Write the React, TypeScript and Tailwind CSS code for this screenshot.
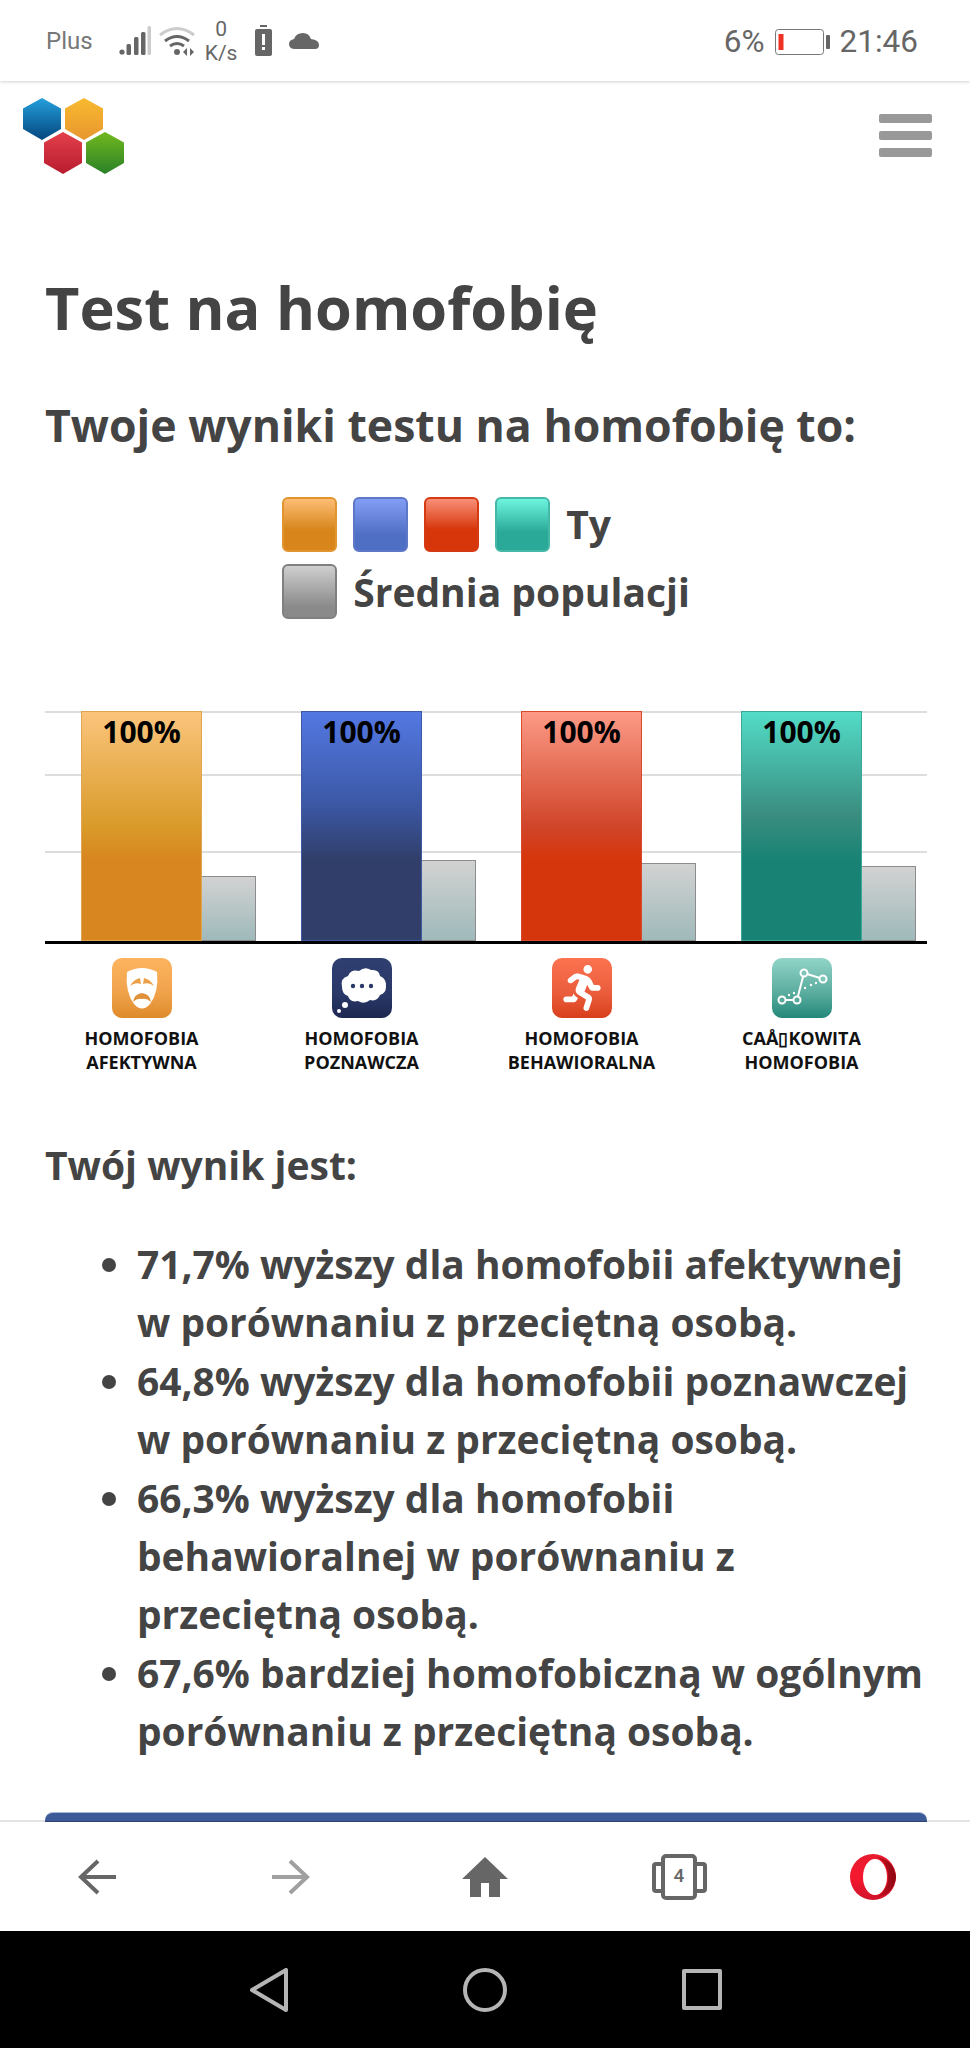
import { FaRunning } from 'react-icons/fa'

const bars = [
  {
    color: 'bg-[linear-gradient(#fbc47c,#d99b2a_50%,#d8861f_65%)] border-[#e0a550]',
    avg: 'h-[65px]',
    line1: 'HOMOFOBIA',
    line2: 'AFEKTYWNA',
    icon: <MaskIcon />,
    tile: 'bg-[linear-gradient(#fdb35f,#f0a24a_60%,#dd8a2a)]',
  },
  {
    color: 'bg-[linear-gradient(#5378e2,#3c58a6_40%,#303e69_65%)] border-[#3f5aa5]',
    avg: 'h-[81px]',
    line1: 'HOMOFOBIA',
    line2: 'POZNAWCZA',
    icon: <CloudIcon />,
    tile: 'bg-[linear-gradient(#2f3f70,#2a3868_60%,#1d2850)]',
  },
  {
    color: 'bg-[linear-gradient(#fc9a86,#d0452a_50%,#d6360b_65%)] border-[#d9492c]',
    avg: 'h-[78px]',
    line1: 'HOMOFOBIA',
    line2: 'BEHAWIORALNA',
    icon: <FaRunning className="text-white" size={46} />,
    tile: 'bg-[linear-gradient(#fc7350,#ea5c3b_60%,#d83f1a)]',
  },
  {
    color: 'bg-[linear-gradient(#52dcc7,#3a8d80_45%,#188374_65%)] border-[#3aa899]',
    avg: 'h-[75px]',
    line1: 'CAÅ▯KOWITA',
    line2: 'HOMOFOBIA',
    icon: <GraphIcon />,
    tile: 'bg-[linear-gradient(#92d4c8,#58ab9d_60%,#23877a)]',
  },
]

const results = [
  '71,7% wyższy dla homofobii afektywnej w porównaniu z przeciętną osobą.',
  '64,8% wyższy dla homofobii poznawczej w porównaniu z przeciętną osobą.',
  '66,3% wyższy dla homofobii behawioralnej w porównaniu z przeciętną osobą.',
  '67,6% bardziej homofobiczną w ogólnym porównaniu z przeciętną osobą.',
]

function MaskIcon() {
  return (
    <svg width="60" height="60" viewBox="0 0 60 60">
      <path d="M15 14Q30 6 45 14Q47 34 38 46Q30 55 22 46Q13 34 15 14z" fill="#fff" />
      <path d="M18 28Q22 21 28 20L29 26Q23 24 18 28zM42 28Q38 21 32 20L31 26Q37 24 42 28z" fill="#eda04a" />
      <path d="M21 44Q22 36 30 35Q38 36 39 44Q35 40 30 41Q25 40 21 44z" fill="#e0913a" />
    </svg>
  )
}

function CloudIcon() {
  return (
    <svg width="60" height="60" viewBox="0 0 60 60">
      <path d="M10 29q-2-9 6-11q3-7 11-5q6-5 12-1q8-1 9 6q7 3 6 11q0 6-6 8q-3 7-10 5q-6 5-12 1q-8 2-10-5q-6-2-6-9z" fill="#fff" />
      <circle cx="13" cy="47" r="3" fill="#fff" />
      <circle cx="7" cy="53" r="2" fill="#fff" />
      <circle cx="21" cy="28" r="2.2" fill="#2a3868" />
      <circle cx="30" cy="28" r="2.2" fill="#2a3868" />
      <circle cx="39" cy="28" r="2.2" fill="#2a3868" />
    </svg>
  )
}

function GraphIcon() {
  return (
    <svg width="60" height="60" viewBox="0 0 60 60" fill="none" stroke="#fff">
      <path d="M10 42H25L32 15L51 21" strokeWidth="2" />
      <circle cx="10" cy="42" r="3.5" strokeWidth="2" fill="#58ab9d" />
      <circle cx="25" cy="42" r="3.5" strokeWidth="2" fill="#58ab9d" />
      <circle cx="32" cy="15" r="3.5" strokeWidth="2" fill="#7fc6b9" />
      <circle cx="51" cy="21" r="3.5" strokeWidth="2" fill="#7fc6b9" />
      <g fill="#fff" stroke="none">
        <circle cx="17" cy="37" r="1.2" />
        <circle cx="22" cy="35" r="1.2" />
        <circle cx="33" cy="30" r="1.2" />
        <circle cx="39" cy="27" r="1.2" />
        <circle cx="44" cy="25" r="1.2" />
      </g>
    </svg>
  )
}

function Hexagons() {
  const hex = (x: number, y: number, fill: string) => (
    <polygon
      points={`${x + 19},${y} ${x + 38},${y + 10.5} ${x + 38},${y + 31} ${x + 19},${y + 42} ${x},${y + 31} ${x},${y + 10.5}`}
      fill={fill}
    />
  )
  return (
    <svg width="102" height="77" viewBox="0 0 102 77">
      <defs>
        <linearGradient id="hb" x1="0" y1="0" x2="0" y2="1">
          <stop offset="0" stopColor="#25a0dc" />
          <stop offset="1" stopColor="#04467e" />
        </linearGradient>
        <linearGradient id="ho" x1="0" y1="0" x2="0" y2="1">
          <stop offset="0" stopColor="#f8ba30" />
          <stop offset="1" stopColor="#e8962e" />
        </linearGradient>
        <linearGradient id="hr" x1="0" y1="0" x2="0" y2="1">
          <stop offset="0" stopColor="#e2404a" />
          <stop offset="1" stopColor="#b91c30" />
        </linearGradient>
        <linearGradient id="hg" x1="0" y1="0" x2="0" y2="1">
          <stop offset="0" stopColor="#72b81e" />
          <stop offset="1" stopColor="#2a8128" />
        </linearGradient>
      </defs>
      {hex(0, 0, 'url(#hb)')}
      {hex(42, 0, 'url(#ho)')}
      {hex(21, 34, 'url(#hr)')}
      {hex(63, 34, 'url(#hg)')}
    </svg>
  )
}

function StatusBar() {
  return (
    <div className="h-[81px] shrink-0 flex items-center justify-between pl-[46px] pr-[52px] bg-white text-[#666] font-['Roboto',sans-serif] shadow-[0_1px_3px_rgba(0,0,0,0.18)] relative z-20">
      <div className="flex items-center">
        <span className="text-[24px] text-[#777]">Plus</span>
        <svg className="ml-[26px]" width="32" height="30" viewBox="0 0 32 30">
          <circle cx="3" cy="26" r="2.6" fill="#666" />
          <rect x="7.5" y="18" width="4.5" height="11" rx="1.5" fill="#666" />
          <rect x="15" y="11" width="4.5" height="18" rx="1.5" fill="#666" />
          <rect x="22" y="6" width="4.5" height="23" rx="1.5" fill="#666" />
          <rect x="28.5" y="0" width="3.5" height="29" rx="1.5" fill="#ccc" />
        </svg>
        <svg className="ml-[8px]" width="36" height="30" viewBox="0 0 36 30" fill="none">
          <path d="M1 9q17-13 34 0" stroke="#ccc" strokeWidth="3" />
          <path d="M6 15q12-9 24 0" stroke="#666" strokeWidth="3" />
          <path d="M11 20q7-5 14 0" stroke="#666" strokeWidth="3" />
          <circle cx="18" cy="26" r="3" fill="#666" />
          <path d="M28 22l-4 4l4 4zM31 22l4 4l-4 4z" fill="#666" />
        </svg>
        <div className="ml-[10px] w-[33px] flex flex-col items-center text-[21px] leading-[24px] text-[#666]">
          <span>0</span>
          <span>K/s</span>
        </div>
        <svg className="ml-[17px]" width="17" height="31" viewBox="0 0 17 31">
          <rect x="5" y="0" width="7" height="2" fill="#666" />
          <rect x="0" y="4" width="17" height="27" rx="2" fill="#666" />
          <rect x="7" y="9" width="3" height="11" fill="#fff" />
          <rect x="7" y="22" width="3" height="3" fill="#fff" />
        </svg>
        <svg className="ml-[17px]" width="30" height="16" viewBox="0 0 30 16">
          <path d="M6 16q-6 0-6-5q0-4 5-5q2-6 9-6q6 0 8 6q8 1 8 6q0 4-4 4z" fill="#666" />
        </svg>
      </div>
      <div className="flex items-center mt-[2px]">
        <span className="text-[31.5px]">6%</span>
        <svg className="ml-[10px]" width="55" height="26" viewBox="0 0 55 26">
          <rect x="0.5" y="0.5" width="48" height="25" rx="3" fill="#fff" stroke="#777" />
          <rect x="3.5" y="5" width="5" height="16" fill="#ee3124" />
          <rect x="51" y="6" width="4" height="14" rx="1" fill="#666" />
        </svg>
        <span className="ml-[10px] text-[31.5px]">21:46</span>
      </div>
    </div>
  )
}

function BottomNav() {
  return (
    <div className="h-[109px] shrink-0 grid grid-cols-5 items-center justify-items-center bg-white shadow-[0_-2px_0_#e4e4e4]">
      <svg width="38" height="36" viewBox="0 0 38 36" fill="none" stroke="#666" strokeWidth="4">
        <path d="M20 2L3 18l17 16M3 18h35" />
      </svg>
      <svg width="38" height="36" viewBox="0 0 38 36" fill="none" stroke="#a0a0a0" strokeWidth="4">
        <path d="M18 2l17 16l-17 16M35 18H0" />
      </svg>
      <svg width="46" height="40" viewBox="0 0 46 40">
        <path d="M23 0L46 22H38V40H27V26H19V40H8V22H0z" fill="#666" />
      </svg>
      <div className="relative w-[55px] h-[46px] flex items-center justify-center">
        <div className="absolute left-0 top-[8px] w-[14px] h-[31px] border-[4px] border-[#666] rounded-[4px]" />
        <div className="absolute right-0 top-[8px] w-[14px] h-[31px] border-[4px] border-[#666] rounded-[4px]" />
        <div className="relative w-[36px] h-[46px] bg-white border-[4px] border-[#666] rounded-[5px] flex items-center justify-center text-[19px] font-medium text-[#666] font-['Roboto',sans-serif]">
          4
        </div>
      </div>
      <svg width="46" height="46" viewBox="0 0 46 46">
        <defs>
          <linearGradient id="op" x1="0" y1="0" x2="0" y2="1">
            <stop offset="0" stopColor="#e81c30" />
            <stop offset="0.5" stopColor="#f5182e" />
            <stop offset="1" stopColor="#d0142a" />
          </linearGradient>
          <linearGradient id="opd" x1="0" y1="0" x2="1" y2="0">
            <stop offset="0" stopColor="#c80f22" />
            <stop offset="1" stopColor="#8e0814" />
          </linearGradient>
        </defs>
        <circle cx="23" cy="23" r="23" fill="url(#op)" />
        <path d="M26 3C38 4 45 12 46 23C45 34 38 42 26 43C34 40 38 32 38 23C38 14 34 6 26 3z" fill="url(#opd)" />
        <ellipse cx="25" cy="23" rx="12" ry="18" fill="#fff" />
      </svg>
    </div>
  )
}

function AndroidNav() {
  return (
    <div className="h-[117px] shrink-0 bg-black flex items-center justify-center gap-[175px] pl-[1px]">
      <svg width="38" height="44" viewBox="0 0 38 44" fill="none" stroke="#b5b5b5" strokeWidth="4" strokeLinejoin="round">
        <path d="M36 2V42L2 22z" />
      </svg>
      <svg width="44" height="44" viewBox="0 0 44 44" fill="none" stroke="#b5b5b5" strokeWidth="4">
        <circle cx="22" cy="22" r="20" />
      </svg>
      <svg width="40" height="41" viewBox="0 0 40 41" fill="none" stroke="#b5b5b5" strokeWidth="4" strokeLinejoin="round">
        <rect x="2" y="2" width="36" height="37" />
      </svg>
    </div>
  )
}

function Chart() {
  return (
    <>
      <div className="relative h-[233px] mt-[92px] border-b-[3px] border-black">
        <div className="absolute inset-x-0 top-0 border-t-2 border-[#ddd]" />
        <div className="absolute inset-x-0 top-[63px] border-t-2 border-[#ddd]" />
        <div className="absolute inset-x-0 top-[140px] border-t-2 border-[#ddd]" />
        <div className="relative h-full grid grid-cols-[repeat(4,220px)]">
          {bars.map((bar, i) => (
            <div key={i} className="flex items-end pl-[36px]">
              <div className={`w-[121px] h-full border text-center text-black text-[30px] font-bold leading-[40px] ${bar.color}`}>
                100%
              </div>
              <div className={`w-[54px] border border-[#8c8c8c] border-l-0 bg-[linear-gradient(#d2d2d2,#9fb9ba)] ${bar.avg}`} />
            </div>
          ))}
        </div>
      </div>
      <div className="grid grid-cols-[repeat(4,220px)] mt-[14px]">
        {bars.map((bar, i) => (
          <div key={i} className="w-[193px] flex flex-col items-center">
            <div className={`w-[60px] h-[60px] rounded-[10px] flex items-center justify-center ${bar.tile}`}>
              {bar.icon}
            </div>
            <div className="mt-[8px] text-center text-[18px] font-bold leading-[24px] text-[#111]">
              <div>{bar.line1}</div>
              <div>{bar.line2}</div>
            </div>
          </div>
        ))}
      </div>
    </>
  )
}

function Swatch({ className }: { className: string }) {
  return <div className={`w-[55px] h-[55px] rounded-[6px] border-2 ${className}`} />
}

export default function App() {
  return (
    <div className="h-[2048px] w-[970px] flex flex-col overflow-hidden bg-white font-['Open_Sans',sans-serif] text-[#444]">
      <StatusBar />
      <div className="relative z-10 flex-1 min-h-0 overflow-hidden">
        <div className="h-[95px] flex items-start justify-between pt-[17px] pl-[23px] pr-[38px]">
          <Hexagons />
          <div className="mt-[16px] flex flex-col gap-[8px]">
            <div className="w-[53px] h-[9px] rounded-[2px] bg-[#999]" />
            <div className="w-[53px] h-[9px] rounded-[2px] bg-[#999]" />
            <div className="w-[53px] h-[9px] rounded-[2px] bg-[#999]" />
          </div>
        </div>
        <div className="pl-[45px] pr-[43px]">
          <h1 className="mt-[95px] text-[59.5px] font-bold leading-[72px]">Test na homofobię</h1>
          <h2 className="mt-[54px] text-[44.6px] font-bold leading-[56px]">Twoje wyniki testu na homofobię to:</h2>

          <div className="mt-[44px] w-fit mx-auto flex flex-col gap-[12px] text-[39px] font-bold leading-[55px]">
            <div className="flex items-center gap-[16px]">
              <Swatch className="bg-[linear-gradient(#fdbd74,#d8861c_60%)] border-[#e0952f]" />
              <Swatch className="bg-[linear-gradient(#839df5,#4f6fc4_70%)] border-[#5c78c6]" />
              <Swatch className="bg-[linear-gradient(#f98f78,#d6360a_60%)] border-[#d53a12]" />
              <Swatch className="bg-[linear-gradient(#6cf5de,#2aa898_65%)] border-[#45b8a8]" />
              <span className="-mt-[2px]">Ty</span>
            </div>
            <div className="flex items-center gap-[16px]">
              <Swatch className="bg-[linear-gradient(#cfcfcf,#8a8a8a_80%)] border-[#808080]" />
              <span>Średnia populacji</span>
            </div>
          </div>

          <Chart />

          <p className="mt-[66px] text-[39px] font-bold leading-[50px]">Twój wynik jest:</p>
          <ul className="mt-[45px] list-disc pl-[92px] text-[38.9px] font-bold leading-[58.4px]">
            {results.map((r) => (
              <li key={r}>{r}</li>
            ))}
          </ul>
          <div className="mt-[51px] h-[10px] rounded-t-[8px] bg-[#3d5a98] border-t border-t-[#a9b9d8] border-b border-b-[#2d4270]" />
        </div>
      </div>
      <BottomNav />
      <AndroidNav />
    </div>
  )
}
